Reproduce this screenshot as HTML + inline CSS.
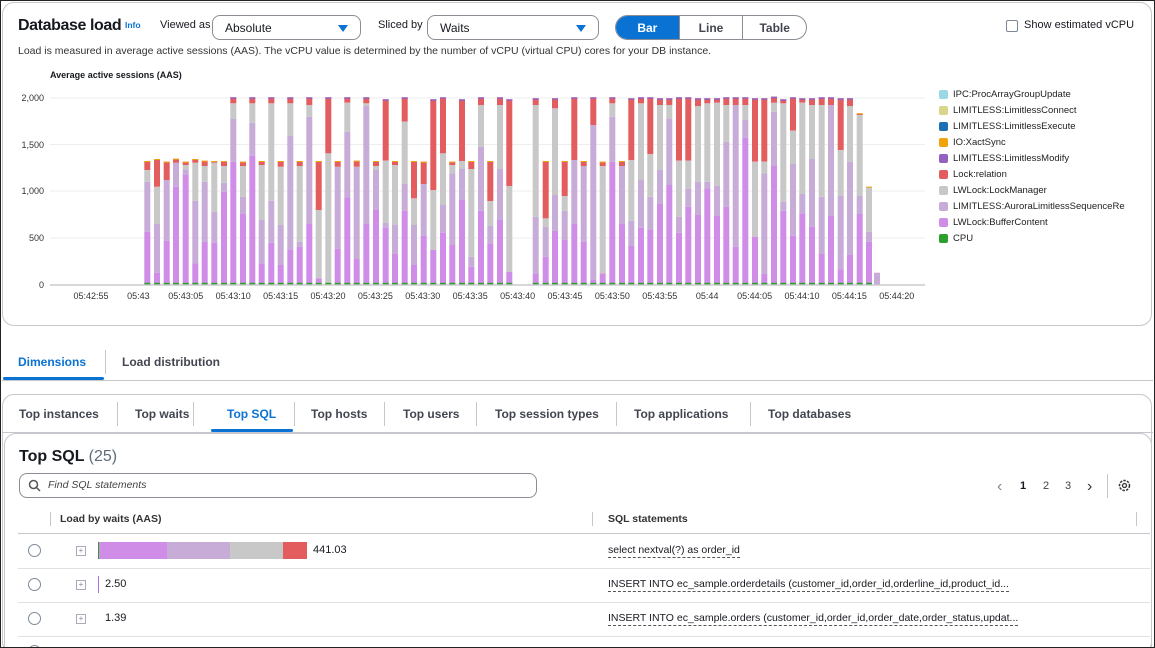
<!DOCTYPE html>
<html><head><meta charset="utf-8">
<style>
*{box-sizing:border-box;margin:0;padding:0}
html,body{width:1155px;height:648px;overflow:hidden}
body{background:#fff;font-family:"Liberation Sans",Arial,sans-serif;color:#16191f;position:relative}
.wrap{position:absolute;left:0;top:0;width:1155px;height:648px;overflow:hidden}
.frame{position:absolute;left:0;top:0;width:1155px;height:648px;border:1px solid #222;pointer-events:none;z-index:10}
.abs{position:absolute;white-space:nowrap}
.card1{position:absolute;left:2px;top:2px;width:1150px;height:324px;border:1px solid #c6c6cd;border-radius:12px}
.sel{position:absolute;height:25px;border:1px solid #8c8c94;border-radius:8px;font-size:12px;padding:5px 0 0 12px}
.sel:after{content:"";position:absolute;right:12px;top:9px;border-left:5px solid transparent;border-right:5px solid transparent;border-top:7px solid #0972d3}
.seg{position:absolute;left:615px;top:15px;width:192px;height:25px;border:1px solid #8c8c94;border-radius:14px;overflow:hidden;display:flex;font-size:12px;font-weight:bold}
.seg div{flex:1;text-align:center;padding-top:5px;color:#424650;border-left:1px solid #8c8c94}
.seg div:first-child{background:#0972d3;color:#fff;border-left:none}
.lg{position:absolute;left:939px;font-size:9.5px;color:#222}
.lg i{position:absolute;left:0;top:1px;width:9px;height:9px;border-radius:2px}
.lg span{position:absolute;left:14px;top:0;white-space:nowrap}
.tab{position:absolute;font-size:12px;font-weight:bold;color:#424650;white-space:nowrap}
.vs{position:absolute;width:1px;background:#c6c6cd}
.row{position:absolute;left:18px;width:1132px;height:1px;background:#e0e0e4}
.radio{position:absolute;left:28px;width:13px;height:13px;border:1.5px solid #7d8998;border-radius:50%}
.plus{position:absolute;left:76px;width:10px;height:10px;border:1px solid #aab;font-size:8px;line-height:8px;text-align:center;color:#889}
.sql{position:absolute;left:608px;font-size:10.5px;border-bottom:1px dashed #555;white-space:nowrap;line-height:13px}
</style></head><body><div class="wrap">
<div class="frame"></div>
<div class="card1"></div>
<div class="abs" style="left:18px;top:17px;font-size:16px;font-weight:bold;letter-spacing:-0.4px">Database load</div>
<div class="abs" style="left:125px;top:20px;font-size:8.5px;font-weight:bold;color:#0972d3">Info</div>
<div class="abs" style="left:160px;top:19px;font-size:11px">Viewed as</div>
<div class="sel" style="left:212px;top:15px;width:149px">Absolute</div>
<div class="abs" style="left:378px;top:19px;font-size:11px">Sliced by</div>
<div class="sel" style="left:427px;top:15px;width:172px">Waits</div>
<div class="seg"><div>Bar</div><div>Line</div><div>Table</div></div>
<div class="abs" style="left:1006px;top:20px;width:12px;height:12px;border:1.5px solid #7d8998;border-radius:2px"></div>
<div class="abs" style="left:1024px;top:19px;font-size:11px">Show estimated vCPU</div>
<div class="abs" style="left:18px;top:45px;font-size:10.5px;color:#333">Load is measured in average active sessions (AAS). The vCPU value is determined by the number of vCPU (virtual CPU) cores for your DB instance.</div>
<div class="abs" style="left:50px;top:70px;font-size:9px;font-weight:bold">Average active sessions (AAS)</div>

<svg id="ch" class="abs" style="left:0;top:0" width="935" height="310" xmlns="http://www.w3.org/2000/svg">
<g stroke="#eeeeee" stroke-width="1">
<line x1="50" x2="925" y1="98" y2="98"/><line x1="50" x2="925" y1="144.5" y2="144.5"/><line x1="50" x2="925" y1="191" y2="191"/><line x1="50" x2="925" y1="238" y2="238"/>
</g>
<line x1="50" x2="925" y1="285" y2="285" stroke="#ccc" stroke-width="1.5"/>
<g font-size="9" fill="#333" text-anchor="end" font-family="Liberation Sans,sans-serif">
<text x="44" y="101">2,000</text><text x="44" y="148">1,500</text><text x="44" y="194">1,000</text><text x="44" y="241">500</text><text x="44" y="288">0</text>
</g>
<g id="bars"></g>
<g id="xl" font-size="9" fill="#333" text-anchor="middle" font-family="Liberation Sans,sans-serif"></g>
</svg>

<div class="lg" style="top:89px"><i style="background:#9ad8e4"></i><span>IPC:ProcArrayGroupUpdate</span></div>
<div class="lg" style="top:105px"><i style="background:#d9d58a"></i><span>LIMITLESS:LimitlessConnect</span></div>
<div class="lg" style="top:121px"><i style="background:#1f6fb4"></i><span>LIMITLESS:LimitlessExecute</span></div>
<div class="lg" style="top:137px"><i style="background:#f0a30a"></i><span>IO:XactSync</span></div>
<div class="lg" style="top:153px"><i style="background:#9362c0"></i><span>LIMITLESS:LimitlessModify</span></div>
<div class="lg" style="top:169px"><i style="background:#e35d5f"></i><span>Lock:relation</span></div>
<div class="lg" style="top:185px"><i style="background:#c8c8c8"></i><span>LWLock:LockManager</span></div>
<div class="lg" style="top:201px"><i style="background:#c6acd6"></i><span>LIMITLESS:AuroraLimitlessSequenceRe</span></div>
<div class="lg" style="top:217px"><i style="background:#d08de8"></i><span>LWLock:BufferContent</span></div>
<div class="lg" style="top:233px"><i style="background:#2ca02c"></i><span>CPU</span></div>

<div class="tab" style="left:18px;top:355px;color:#0972d3">Dimensions</div>
<div class="vs" style="left:105px;top:350px;height:24px"></div>
<div class="tab" style="left:122px;top:355px">Load distribution</div>
<div class="abs" style="left:3px;top:377px;width:101px;height:3px;background:#0972d3;border-radius:2px"></div>
<div class="abs" style="left:2px;top:380px;width:1151px;height:1px;background:#c6c6cd"></div>

<div class="abs" style="left:2px;top:394px;width:1150px;height:260px;border:1px solid #c6c6cd;border-radius:12px"></div>
<div class="tab" style="left:19px;top:407px">Top instances</div>
<div class="vs" style="left:117px;top:402px;height:24px"></div>
<div class="tab" style="left:135px;top:407px">Top waits</div>
<div class="vs" style="left:193px;top:402px;height:24px"></div>
<div class="tab" style="left:227px;top:407px;color:#0972d3">Top SQL</div>
<div class="vs" style="left:294px;top:402px;height:24px"></div>
<div class="tab" style="left:311px;top:407px">Top hosts</div>
<div class="vs" style="left:384px;top:402px;height:24px"></div>
<div class="tab" style="left:403px;top:407px">Top users</div>
<div class="vs" style="left:476px;top:402px;height:24px"></div>
<div class="tab" style="left:495px;top:407px">Top session types</div>
<div class="vs" style="left:616px;top:402px;height:24px"></div>
<div class="tab" style="left:634px;top:407px">Top applications</div>
<div class="vs" style="left:750px;top:402px;height:24px"></div>
<div class="tab" style="left:768px;top:407px">Top databases</div>
<div class="abs" style="left:211px;top:429px;width:82px;height:3px;background:#0972d3;border-radius:2px"></div>
<div class="abs" style="left:2px;top:432px;width:1151px;height:1px;background:#c6c6cd"></div>

<div class="abs" style="left:4px;top:433px;width:1148px;height:240px;border:1px solid #c6c6cd;border-radius:12px"></div>
<div class="abs" style="left:19px;top:448px;font-size:16px;font-weight:bold">Top SQL <span style="font-weight:normal;color:#5f6b7a">(25)</span></div>
<div class="abs" style="left:19px;top:473px;width:518px;height:25px;border:1px solid #8c8c94;border-radius:8px"></div>
<svg class="abs" style="left:28px;top:479px" width="13" height="13"><circle cx="5.5" cy="5.5" r="4" fill="none" stroke="#555" stroke-width="1.5"/><line x1="8.5" y1="8.5" x2="12" y2="12" stroke="#555" stroke-width="1.5"/></svg>
<div class="abs" style="left:48px;top:479px;font-size:10.5px;font-style:italic;color:#444">Find SQL statements</div>
<div class="abs" style="left:997px;top:478px;font-size:16px;color:#7d8998">&#8249;</div>
<div class="abs" style="left:1020px;top:480px;font-size:11px;font-weight:bold">1</div>
<div class="abs" style="left:1043px;top:480px;font-size:11px;color:#444">2</div>
<div class="abs" style="left:1065px;top:480px;font-size:11px;color:#444">3</div>
<div class="abs" style="left:1087px;top:478px;font-size:16px;color:#333">&#8250;</div>
<div class="vs" style="left:1107px;top:474px;height:24px"></div>
<svg class="abs" style="left:1118px;top:479px" width="13" height="13"><circle cx="6.5" cy="6.5" r="5" fill="none" stroke="#333" stroke-width="1.5" stroke-dasharray="2.5 1.2"/><circle cx="6.5" cy="6.5" r="2" fill="none" stroke="#333" stroke-width="1.3"/></svg>

<div class="vs" style="left:50px;top:512px;height:14px"></div>
<div class="abs" style="left:60px;top:513px;font-size:10.5px;font-weight:bold;color:#333">Load by waits (AAS)</div>
<div class="vs" style="left:592px;top:512px;height:14px"></div>
<div class="abs" style="left:608px;top:513px;font-size:10.5px;font-weight:bold;color:#333">SQL statements</div>
<div class="vs" style="left:1136px;top:512px;height:14px"></div>
<div class="row" style="top:533px;background:#c6c6cd"></div>

<div class="radio" style="top:544px"></div><div class="plus" style="top:546px">+</div>
<div class="abs" style="left:98px;top:542px;width:1px;height:17px;background:#2ca02c"></div>
<div class="abs" style="left:99px;top:542px;width:68px;height:17px;background:#d08de8"></div>
<div class="abs" style="left:167px;top:542px;width:63px;height:17px;background:#c6acd6"></div>
<div class="abs" style="left:230px;top:542px;width:53px;height:17px;background:#c8c8c8"></div>
<div class="abs" style="left:283px;top:542px;width:24px;height:17px;background:#e35d5f"></div>
<div class="abs" style="left:313px;top:544px;font-size:11px">441.03</div>
<div class="sql" style="top:544px">select nextval(?) as order_id</div>
<div class="row" style="top:568px"></div>

<div class="radio" style="top:578px"></div><div class="plus" style="top:580px">+</div>
<div class="abs" style="left:98px;top:576px;width:1px;height:17px;background:#b070d0"></div>
<div class="abs" style="left:105px;top:578px;font-size:11px">2.50</div>
<div class="sql" style="top:578px">INSERT INTO ec_sample.orderdetails (customer_id,order_id,orderline_id,product_id...</div>
<div class="row" style="top:602px"></div>

<div class="radio" style="top:612px"></div><div class="plus" style="top:614px">+</div>
<div class="abs" style="left:105px;top:612px;font-size:11px">1.39</div>
<div class="sql" style="top:612px">INSERT INTO ec_sample.orders (customer_id,order_id,order_date,order_status,updat...</div>
<div class="row" style="top:636px"></div>
<div class="radio" style="top:645px"></div>
</div>
<script>
var A=[[52,425,275,240,213],[81,548,402,290,207],[110,452,270,270,215],[138,290,218,218,206],[167,253,238,225,215],[196,520,332,218,207],[224,456,275,228,212],[253,458,365,218,213],[282,305,278,228,213],[310,215,87,40,22],[339,372,320,228,215],[367,197,98,40,22],[395,520,390,225,213],[424,458,332,40,22],[452,525,405,230,213],[481,478,138,40,22],[509,470,455,228,213],[538,402,80,45,22],[566,565,565,360,213],[595,583,583,190,22],[623,476,230,230,213],[652,322,125,38,22],[680,507,230,230,212],[709,402,48,40,22],[738,360,240,228,213],[767,413,398,212,28],[795,492,405,225,213],[824,362,282,95,22],[852,525,405,325,213],[881,437,282,282,215],[910,480,480,300,28],[939,428,345,190,22],[967,465,250,225,215],[996,330,237,213,28],[1024,530,500,237,213],[1053,362,170,45,22],[1081,460,408,333,213],[1110,390,237,45,22],[1138,545,545,288,28]];
var B=[[17,552,380,45,25],[47,500,410,385,213],[75,422,315,55,25],[104,450,362,318,213],[133,400,210,210,22],[161,455,228,228,213],[190,570,105,105,22],[218,550,550,228,215],[247,215,80,40,22],[276,400,228,228,213],[304,468,392,210,25],[333,413,268,40,22],[361,420,320,192,22],[390,340,240,45,25],[418,285,85,45,25],[447,428,380,212,22],[475,350,297,212,22],[504,375,275,48,25],[532,297,275,40,25],[561,378,287,38,25],[589,350,155,45,22],[617,470,45,45,22],[646,143,90,45,22],[675,440,440,215,25],[703,552,250,215,25],[732,228,65,38,20],[760,362,335,40,28],[789,437,222,122,22],[817,370,312,38,25],[846,410,207,45,25],[875,492,320,45,22],[903,378,45,45,22],[932,538,317,180,25],[960,495,215,48,25],[989,372,318,75,70],[1017,455,425,290,290]];
var s='',cols=['#d08de8','#c6acd6','#c8c8c8','#e35d5f'];
function Y(z){return 90+z/3}
function add(d,ox){var x=ox+d[0]/3-3,base=Y(583),pts=[583,d[1],d[2],d[3],d[4]];
for(var i=0;i<4;i++){var y1=Y(pts[i+1]),y0=Y(pts[i]);if(y0-y1>0.2)s+='<rect x="'+x.toFixed(1)+'" y="'+y1.toFixed(1)+'" width="6" height="'+(y0-y1).toFixed(1)+'" fill="'+cols[i]+'"/>';}
var t=Y(d[4]);if(d[4]<30)s+='<rect x="'+x.toFixed(1)+'" y="'+t.toFixed(1)+'" width="6" height="1.5" fill="#9362c0"/>';else s+='<rect x="'+x.toFixed(1)+'" y="'+t.toFixed(1)+'" width="6" height="1" fill="#f0a30a"/>';
s+='<rect x="'+x.toFixed(1)+'" y="'+(base-1.5).toFixed(1)+'" width="6" height="1.5" fill="#2ca02c"/>';}
A.forEach(function(d){add(d,130)});B.forEach(function(d){add(d,530)});
s+='<rect x="874" y="'+Y(548).toFixed(1)+'" width="6" height="'+((583-548)/3).toFixed(1)+'" fill="#c6acd6"/>';
document.getElementById('bars').innerHTML=s;
var L=['05:42:55','05:43','05:43:05','05:43:10','05:43:15','05:43:20','05:43:25','05:43:30','05:43:35','05:43:40','05:43:45','05:43:50','05:43:55','05:44','05:44:05','05:44:10','05:44:15','05:44:20'],t='';
L.forEach(function(l,i){t+='<text x="'+(91+i*47.4).toFixed(1)+'" y="299">'+l+'</text>'});
document.getElementById('xl').innerHTML=t;
</script>
</body></html>
